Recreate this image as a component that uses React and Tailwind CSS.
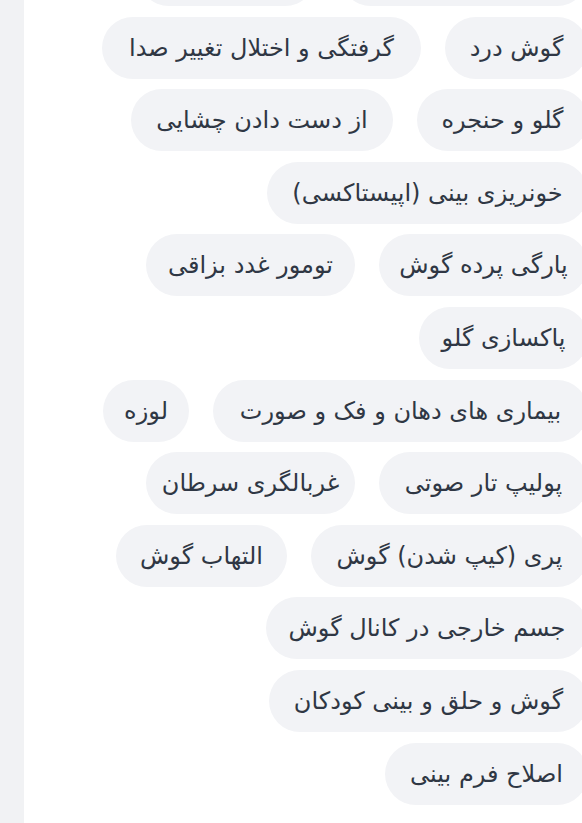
const rows = [
  // row scrolled mostly out of view, only the pill bottoms show
  [
    { label: '', w: 'w-[248px]' },
    { label: '', w: 'w-[178px]' },
  ],
  [
    { label: 'گوش درد', w: 'w-[143px]' },
    { label: 'گرفتگی و اختلال تغییر صدا', w: 'w-[319px]' },
  ],
  [
    { label: 'گلو و حنجره', w: 'w-[171px]' },
    { label: 'از دست دادن چشایی', w: 'w-[262px]' },
  ],
  [{ label: 'خونریزی بینی (اپیستاکسی)', w: 'w-[321px]' }],
  [
    { label: 'پارگی پرده گوش', w: 'w-[209px]' },
    { label: 'تومور غدد بزاقی', w: 'w-[209px]' },
  ],
  [{ label: 'پاکسازی گلو', w: 'w-[169px]' }],
  [
    { label: 'بیماری های دهان و فک و صورت', w: 'w-[375px]' },
    { label: 'لوزه', w: 'w-[86px]' },
  ],
  [
    { label: 'پولیپ تار صوتی', w: 'w-[209px]' },
    { label: 'غربالگری سرطان', w: 'w-[209px]' },
  ],
  [
    { label: 'پری (کیپ شدن) گوش', w: 'w-[277px]' },
    { label: 'التهاب گوش', w: 'w-[171px]' },
  ],
  [{ label: 'جسم خارجی در کانال گوش', w: 'w-[322px]' }],
  [{ label: 'گوش و حلق و بینی کودکان', w: 'w-[319px]' }],
  [{ label: 'اصلاح فرم بینی', w: 'w-[203px]' }],
];

function Tag({ label, w }) {
  return (
    <span
      className={`${w} flex h-[62px] shrink-0 items-center justify-center whitespace-nowrap rounded-full bg-[#f2f3f6] text-[24px] text-[#2f3744]`}
    >
      {label}
    </span>
  );
}

export default function App() {
  return (
    <div
      className="flex min-h-[823px] bg-white"
      style={{ fontFamily: "'DejaVu Sans', sans-serif" }}
    >
      {/* sidebar edge */}
      <div className="w-6 shrink-0 bg-[#f1f2f4]" />

      <main className="min-w-0 flex-1 overflow-hidden">
        <div dir="rtl" className="-mr-1.5 -mt-[56px] flex flex-col gap-y-[10.6px]">
          {rows.map((row, i) => (
            <div key={i} className="flex gap-x-6">
              {row.map((tag, j) => (
                <Tag key={j} {...tag} />
              ))}
            </div>
          ))}
        </div>
      </main>
    </div>
  );
}
